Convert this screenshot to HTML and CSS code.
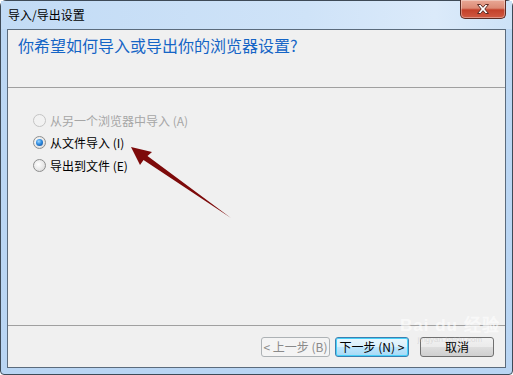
FILE: index.html
```html
<!DOCTYPE html>
<html lang="zh-CN">
<head>
<meta charset="utf-8">
<title>导入/导出设置</title>
<link rel="stylesheet" href="styles.css">
</head>
<body>
<div class="window">
  <div class="titlebar">
    <span class="title">导入/导出设置</span>
    <button class="close" aria-label="关闭">
      <svg width="18" height="12" viewBox="0 0 18 12">
        <path d="M3.5 1.5 L6.5 1.5 L9 4.3 L11.5 1.5 L14.5 1.5 L10.8 6 L14.5 10.5 L11.5 10.5 L9 7.7 L6.5 10.5 L3.5 10.5 L7.2 6 Z" fill="#ffffff" stroke="#5a2a24" stroke-width="1" stroke-linejoin="round"/>
      </svg>
    </button>
  </div>
  <div class="client">
    <div class="header">你希望如何导入或导出你的浏览器设置?</div>
    <div class="body">
      <label class="option disabled"><span class="radio"></span>从另一个浏览器中导入 (A)</label>
      <label class="option"><span class="radio checked"></span>从文件导入 (I)</label>
      <label class="option"><span class="radio"></span>导出到文件 (E)</label>
    </div>
    <div class="footer">
      <button class="btn btn-disabled">&lt; 上一步 (B)</button>
      <button class="btn btn-focus">下一步 (N) &gt;</button>
      <button class="btn btn-cancel">取消</button>
    </div>
    <div class="watermark"><span class="wm-big">Bai du 经验</span><span class="wm-small">jingyan.baidu.com</span></div>
  </div>
  <svg class="arrow" width="513" height="375" viewBox="0 0 513 375">
    <path d="M131 147 L152 152 L147.5 156 L231 218 L143.5 160 L140 165 Z" fill="#7d0a0a"/>
  </svg>
</div>
</body>
</html>
```

FILE: styles.css
```css
* { box-sizing: border-box; }
html, body {
  margin: 0;
  padding: 0;
  width: 513px;
  height: 375px;
  overflow: hidden;
  background: #ffffff;
}
body {
  font-family: "Noto Sans CJK SC", "DejaVu Sans", sans-serif;
  font-size: 12px;
  color: #000;
}
.window {
  position: relative;
  width: 513px;
  height: 375px;
  border: 1px solid #3e4a57;
  border-radius: 6px 6px 4px 4px;
  background: linear-gradient(180deg, #cfe3f8 0%, #bcd7f3 8%, #b9d5f3 100%);
  padding: 0 6px 6px 6px;
  display: flex;
  flex-direction: column;
}
.titlebar {
  height: 28px;
  display: flex;
  align-items: flex-start;
  background: linear-gradient(90deg, #c2dbf5 0%, #cfe3f8 60%, #dbeafa 85%, #cde2f7 100%);
  margin: 0 -6px;
  padding: 0 6px 0 7px;
}
.title {
  margin-top: 6px;
  font-size: 12px;
  line-height: 16px;
  color: #000;
}
.close {
  margin-left: auto;
  margin-right: 0;
  width: 46px;
  height: 19px;
  margin-top: -1px;
  border: 1px solid #5c2b23;
  border-top: none;
  border-radius: 0 0 5px 5px;
  background: linear-gradient(180deg, #e9a896 0%, #dc8a75 45%, #c3402a 55%, #d05a43 100%);
  box-shadow: inset 0 0 0 1px rgba(255,255,255,0.35);
  display: flex;
  align-items: center;
  justify-content: center;
  padding: 0;
}
.close svg { display: block; }
.client {
  position: relative;
  flex: 1;
  background: #f0f0f0;
  border: 1px solid #5b6b7c;
  display: flex;
  flex-direction: column;
}
.header {
  height: 58px;
  border-bottom: 1px solid #a0a0a0;
  padding: 4px 0 0 10px;
  font-size: 16px;
  line-height: 22px;
  color: #1565c6;
}
.body {
  flex: 1;
  padding: 21px 0 0 25px;
  display: flex;
  flex-direction: column;
}
.option {
  height: 22.5px;
  display: flex;
  align-items: center;
  gap: 4px;
  font-size: 12px;
  color: #000;
}
.option.disabled { color: #a6a6a6; }
.radio {
  width: 13px;
  height: 13px;
  border-radius: 50%;
  border: 1px solid #8e8f8f;
  background: radial-gradient(circle at 40% 40%, #ffffff 0%, #e6e6e6 60%, #cfcfcf 100%);
  display: inline-flex;
  align-items: center;
  justify-content: center;
}
.option.disabled .radio {
  border-color: #c4c4c4;
  background: #f2f2f2;
}
.radio.checked::after {
  content: "";
  width: 7px;
  height: 7px;
  border-radius: 50%;
  background: radial-gradient(circle at 40% 35%, #9fd7ff 0%, #2f8ce0 45%, #0b3f8a 100%);
}
.footer {
  height: 42px;
  border-top: 1px solid #a0a0a0;
  display: flex;
  align-items: flex-start;
  padding: 11px 0 0 253px;
}
.btn {
  height: 20px;
  font-family: "Noto Sans CJK SC", "DejaVu Sans", sans-serif;
  font-size: 12px;
  line-height: 16px;
  padding: 0;
  border-radius: 3px;
  border: 1px solid #707070;
  background: linear-gradient(180deg, #f2f2f2 0%, #ebebeb 48%, #dddddd 52%, #cfcfcf 100%);
  color: #000;
}
.btn-disabled {
  width: 69px;
  border-color: #adb2b5;
  background: #f4f4f4;
  color: #8a8a8a;
}
.btn-focus {
  width: 74px;
  margin-left: 5px;
  border-color: #3c7fb1;
  background: linear-gradient(180deg, #eaf6fd 0%, #d9f0fc 48%, #bee6fd 52%, #a7d9f5 100%);
  box-shadow: inset 0 0 0 1px #48d2f9;
}
.btn-cancel {
  width: 74px;
  margin-left: 11px;
}
.watermark {
  position: absolute;
  left: 392px;
  top: 287px;
  display: flex;
  flex-direction: column;
  align-items: center;
  line-height: 1;
  gap: 2px;
  pointer-events: none;
}
.wm-big {
  font-family: "Liberation Sans", sans-serif;
  font-size: 17px;
  font-weight: bold;
  color: rgba(255,255,255,0.6);
  letter-spacing: 1px;
}
.wm-small {
  font-family: "Liberation Sans", sans-serif;
  font-size: 8px;
  color: rgba(190,190,190,0.45);
}
.arrow {
  position: absolute;
  left: -1px;
  top: -1px;
  pointer-events: none;
}
```
